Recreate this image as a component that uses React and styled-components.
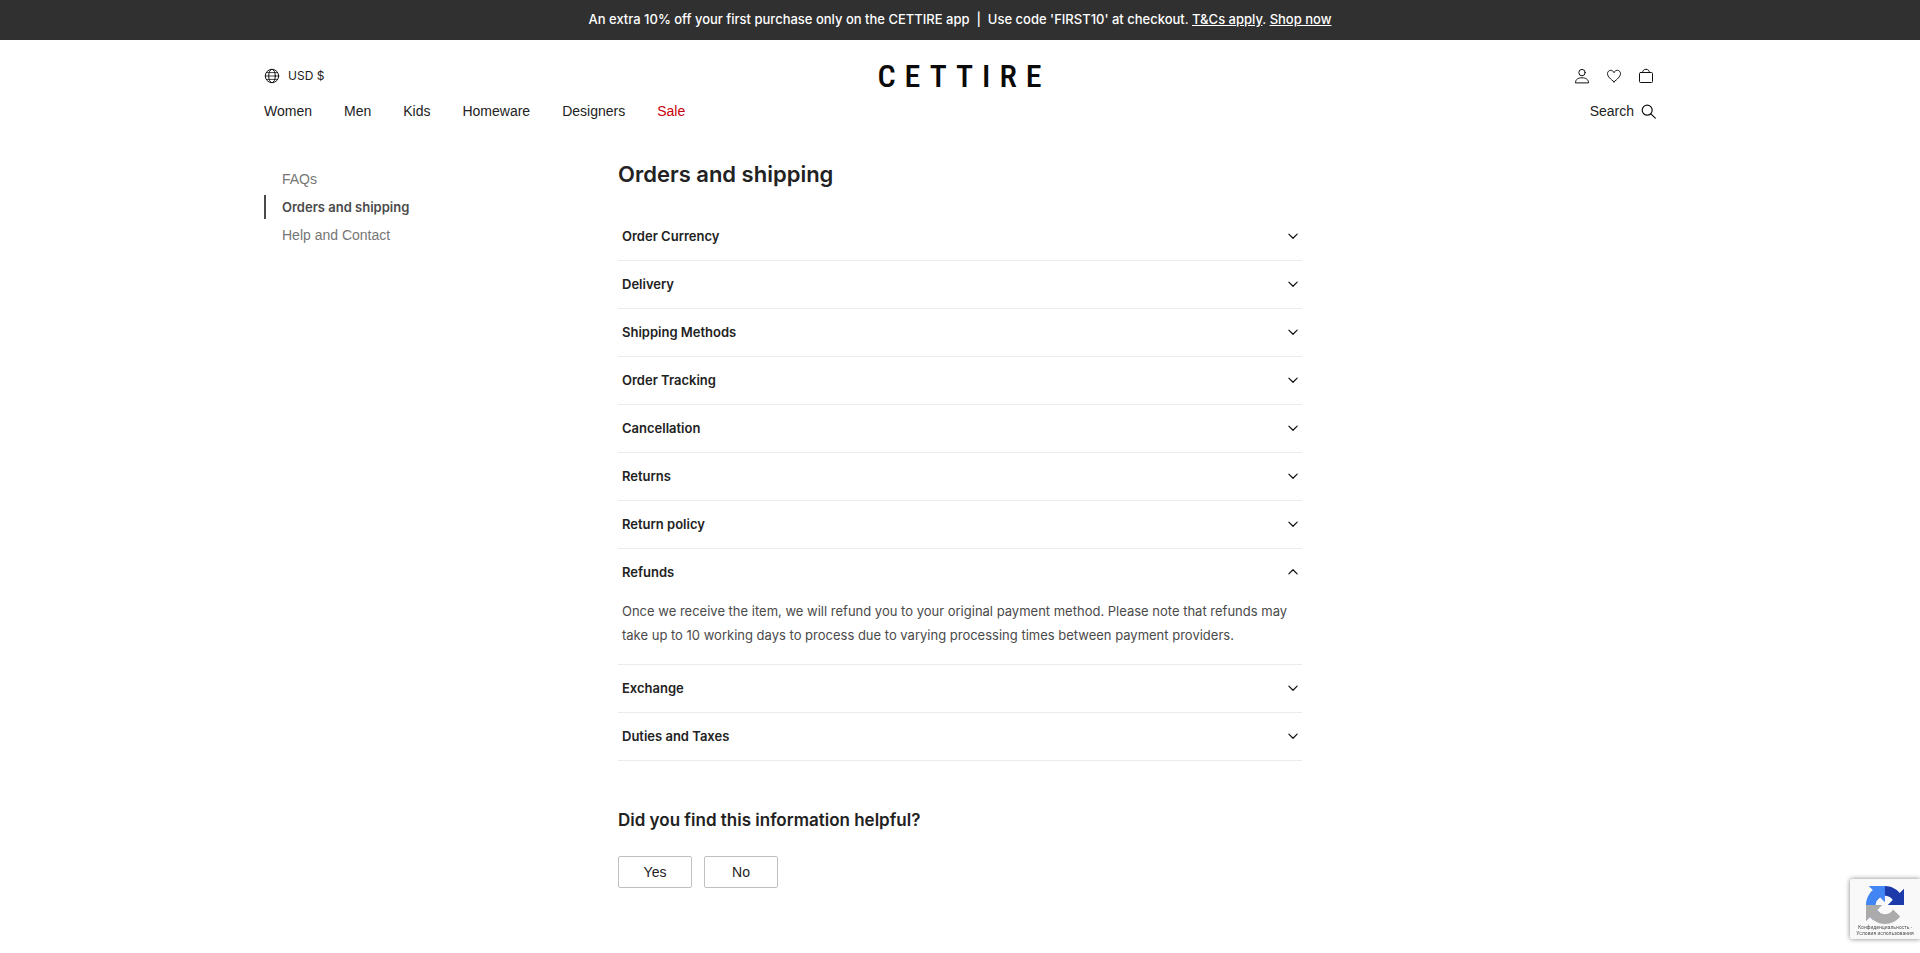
import React, { useState } from "react";
import styled, { createGlobalStyle } from "styled-components";

const GlobalStyle = createGlobalStyle`
  * {
    box-sizing: border-box;
  }
  body {
    margin: 0;
    background: #fff;
    color: #222;
    font-family: "Liberation Sans", Arial, sans-serif;
    font-size: 14px;
    line-height: 20px;
  }
  a {
    color: inherit;
    text-decoration: none;
  }
  button {
    padding: 0;
    border: 0;
    background: none;
    color: inherit;
    font: inherit;
    cursor: pointer;
  }
`;

const Banner = styled.div`
  min-height: 40px;
  padding: 9px 16px 11px;
  background: #303030;
  color: #fff;
  font-family: Inter, sans-serif;
  font-size: 13px;
  font-weight: 500;
  text-align: center;
  white-space: pre-wrap;

  a {
    text-decoration: underline;
  }
`;

const Wrapper = styled.div`
  max-width: 1440px;
  margin: 0 auto;
  padding: 0 24px;
`;

const TopBar = styled.div`
  display: grid;
  grid-template-columns: 1fr auto 1fr;
  align-items: center;
  padding-top: 20px;
`;

const CurrencyButton = styled.button`
  display: flex;
  align-items: center;
  justify-self: start;
  gap: 8px;
  font-family: Inter, sans-serif;
  font-size: 12px;
  line-height: 16px;
`;

const Logo = styled.a`
  padding-left: 8px;
  color: #0a0a0a;
  font-family: "Roboto Condensed", Roboto, sans-serif;
  font-size: 32px;
  font-weight: 500;
  line-height: 32px;
  letter-spacing: 9px;
`;

const IconGroup = styled.div`
  display: flex;
  justify-self: end;
  gap: 16px;
  padding-right: 2px;
`;

const IconButton = styled.button`
  display: flex;
`;

const NavBar = styled.div`
  display: flex;
  align-items: center;
  justify-content: space-between;
  padding-top: 9px;
`;

const Nav = styled.nav`
  display: flex;
  gap: 32px;
`;

const NavLink = styled.a`
  color: ${({ $sale }) => ($sale ? "#c8000a" : "#222")};
`;

const SearchButton = styled.button`
  display: flex;
  align-items: center;
  gap: 6px;
`;

const Body = styled.div`
  display: grid;
  grid-template-columns: 354fr 684fr 354fr;
  padding-top: 37px;
`;

const SideMenu = styled.nav`
  display: flex;
  flex-direction: column;
  align-items: flex-start;
  gap: 4px;
  padding-top: 9px;
`;

const SideLink = styled.a`
  padding-left: 16px;
  border-left: 2px solid ${({ $active }) => ($active ? "#4a4a4a" : "transparent")};
  color: ${({ $active }) => ($active ? "#4a4a4a" : "#767676")};
  font-family: ${({ $active }) => ($active ? "Inter, sans-serif" : "inherit")};
  font-size: ${({ $active }) => ($active ? "13px" : "14px")};
  font-weight: ${({ $active }) => ($active ? 600 : 400)};
  line-height: 24px;
`;

const Title = styled.h1`
  margin: 0 0 23px;
  font-family: Inter, sans-serif;
  font-size: 22px;
  font-weight: 600;
  line-height: 32px;
`;

const Section = styled.section`
  border-bottom: 1px solid #ebebeb;
`;

const SectionHeading = styled.h2`
  margin: 0;
  font-family: Inter, sans-serif;
  font-size: 13px;
  font-weight: 600;
  line-height: 20px;
`;

const SectionToggle = styled.button`
  display: flex;
  align-items: center;
  justify-content: space-between;
  width: 100%;
  height: 47px;
  padding: 0 3px 1px 4px;
  text-align: left;
`;

const SectionText = styled.p`
  margin: 0;
  padding: 3px 4px 17px;
  color: #4a4a4a;
  font-family: Inter, sans-serif;
  font-size: 13px;
  line-height: 24px;
`;

const Question = styled.h2`
  margin: 47px 0 24px;
  font-family: Inter, sans-serif;
  font-size: 17px;
  font-weight: 600;
  line-height: 24px;
`;

const Answers = styled.div`
  display: flex;
  gap: 12px;
  padding-bottom: 40px;
`;

const AnswerButton = styled.button`
  width: 74px;
  height: 32px;
  border: 1px solid #c0c0c0;
  border-radius: 2px;
`;

const Recaptcha = styled.div`
  position: fixed;
  right: 0;
  bottom: 14px;
  display: flex;
  flex-direction: column;
  align-items: center;
  width: 70px;
  height: 60px;
  padding-top: 7px;
  border-radius: 2px 0 0 2px;
  background: #f9f9f9;
  box-shadow: 0 0 5px #808080;
  color: #555;
  font-family: Roboto, sans-serif;
  font-size: 5px;
  line-height: 6px;
  text-align: center;
  white-space: nowrap;

  a {
    display: block;
  }
`;

const Icon = ({ size = 16, children }) => (
  <svg
    width={size}
    height={size}
    viewBox="0 0 16 16"
    fill="none"
    stroke="#111"
    strokeLinecap="round"
    strokeLinejoin="round"
    aria-hidden="true"
  >
    {children}
  </svg>
);

const GlobeIcon = () => (
  <Icon>
    <circle cx="8" cy="8" r="6.7" />
    <ellipse cx="8" cy="8" rx="3.3" ry="6.7" />
    <path d="M1.3 8h13.4M2.4 4.6h11.2M2.4 11.4h11.2" strokeWidth="0.8" />
  </Icon>
);

const UserIcon = () => (
  <Icon>
    <circle cx="8" cy="4.6" r="3.2" />
    <path d="M1.5 14.5c0-3.2 2.6-4.7 6.5-4.7s6.5 1.5 6.5 4.7z" />
  </Icon>
);

const HeartIcon = () => (
  <Icon>
    <path d="M8 13.8C4.9 11.3 1.5 8.7 1.5 5.7c0-2 1.4-3.4 3.2-3.4 1.5 0 2.7.9 3.3 2.4.6-1.5 1.8-2.4 3.3-2.4 1.8 0 3.2 1.4 3.2 3.4 0 3-3.4 5.6-6.5 8.1z" />
  </Icon>
);

const BagIcon = () => (
  <Icon>
    <rect x="1.5" y="4.5" width="13" height="10" rx="1" />
    <path d="M4.6 4.5c0-2 1.4-3.2 3.4-3.2s3.4 1.2 3.4 3.2" />
  </Icon>
);

const SearchIcon = () => (
  <Icon>
    <circle cx="7.2" cy="7.2" r="5" strokeWidth="1.2" />
    <path d="M10.9 10.8l4.4 4.4" strokeWidth="1.2" />
  </Icon>
);

const ChevronIcon = ({ up }) => (
  <Icon size={12}>
    <path d={up ? "M2.5 10.5L8 5l5.5 5.5" : "M2.5 5.5L8 11l5.5-5.5"} strokeWidth="1.6" />
  </Icon>
);

const RecaptchaLogo = () => (
  <svg width="38" height="38" viewBox="0 0 64 64" aria-hidden="true">
    <path
      fill="#1c3aa9"
      d="M64 31.955l-.033-1.37V4.687l-7.16 7.16C50.948 4.674 42.033.093 32.05.093c-10.4 0-19.622 4.96-25.458 12.64l11.736 11.86a15.55 15.55 0 0 1 4.754-5.334c2.05-1.6 4.952-2.906 8.968-2.906.485 0 .86.057 1.135.163 4.976.393 9.288 3.14 11.828 7.124l-8.307 8.307L64 31.953"
    />
    <path
      fill="#4285f4"
      d="M31.862.094l-1.37.033H4.594l7.16 7.16C4.58 13.147 0 22.06 0 32.046c0 10.4 4.96 19.622 12.64 25.458L24.5 45.768a15.55 15.55 0 0 1-5.334-4.754c-1.6-2.05-2.906-4.952-2.906-8.968 0-.485.057-.86.163-1.135.393-4.976 3.14-9.288 7.124-11.828l8.307 8.307L31.86.095"
    />
    <path
      fill="#ababab"
      d="M.001 32.045l.033 1.37v25.898l7.16-7.16c5.86 7.173 14.774 11.754 24.76 11.754 10.4 0 19.622-4.96 25.458-12.64l-11.736-11.86a15.55 15.55 0 0 1-4.754 5.334c-2.05 1.6-4.952 2.906-8.968 2.906-.485 0-.86-.057-1.135-.163-4.976-.393-9.288-3.14-11.828-7.124l8.307-8.307c-10.522.04-22.4.066-27.295-.005"
    />
  </svg>
);

const categories = ["Women", "Men", "Kids", "Homeware", "Designers", "Sale"];

const pages = ["FAQs", "Orders and shipping", "Help and Contact"];

const sections = [
  { title: "Order Currency" },
  { title: "Delivery" },
  { title: "Shipping Methods" },
  { title: "Order Tracking" },
  { title: "Cancellation" },
  { title: "Returns" },
  { title: "Return policy" },
  {
    title: "Refunds",
    text: "Once we receive the item, we will refund you to your original payment method. Please note that refunds may take up to 10 working days to process due to varying processing times between payment providers.",
  },
  { title: "Exchange" },
  { title: "Duties and Taxes" },
];

const App = () => {
  const [opened, setOpened] = useState("Refunds");

  const handleToggle = (title) => {
    setOpened((v) => (v === title ? null : title));
  };

  return (
    <>
      <GlobalStyle />
      <Banner>
        {"An extra 10% off your first purchase only on the CETTIRE app  |  Use code 'FIRST10' at checkout. "}
        <a href="#terms">T&Cs apply</a>
        {". "}
        <a href="#app">Shop now</a>
      </Banner>
      <Wrapper>
        <header>
          <TopBar>
            <CurrencyButton type="button">
              <GlobeIcon />
              USD $
            </CurrencyButton>
            <Logo href="#home">CETTIRE</Logo>
            <IconGroup>
              <IconButton type="button" aria-label="Account">
                <UserIcon />
              </IconButton>
              <IconButton type="button" aria-label="Wishlist">
                <HeartIcon />
              </IconButton>
              <IconButton type="button" aria-label="Bag">
                <BagIcon />
              </IconButton>
            </IconGroup>
          </TopBar>
          <NavBar>
            <Nav>
              {categories.map((name) => (
                <NavLink key={name} href={`#${name}`} $sale={name === "Sale"}>
                  {name}
                </NavLink>
              ))}
            </Nav>
            <SearchButton type="button">
              Search
              <SearchIcon />
            </SearchButton>
          </NavBar>
        </header>
        <Body>
          <SideMenu>
            {pages.map((name) => (
              <SideLink key={name} href="#page" $active={name === "Orders and shipping"}>
                {name}
              </SideLink>
            ))}
          </SideMenu>
          <main>
            <Title>Orders and shipping</Title>
            {sections.map(({ title, text }) => (
              <Section key={title}>
                <SectionHeading>
                  <SectionToggle
                    type="button"
                    aria-expanded={opened === title}
                    onClick={() => handleToggle(title)}
                  >
                    {title}
                    <ChevronIcon up={opened === title} />
                  </SectionToggle>
                </SectionHeading>
                {opened === title && text && <SectionText>{text}</SectionText>}
              </Section>
            ))}
            <Question>Did you find this information helpful?</Question>
            <Answers>
              <AnswerButton type="button">Yes</AnswerButton>
              <AnswerButton type="button">No</AnswerButton>
            </Answers>
          </main>
        </Body>
      </Wrapper>
      <Recaptcha>
        <RecaptchaLogo />
        <a href="#privacy">Конфиденциальность -</a>
        <a href="#conditions">Условия использования</a>
      </Recaptcha>
    </>
  );
};

export default App;
